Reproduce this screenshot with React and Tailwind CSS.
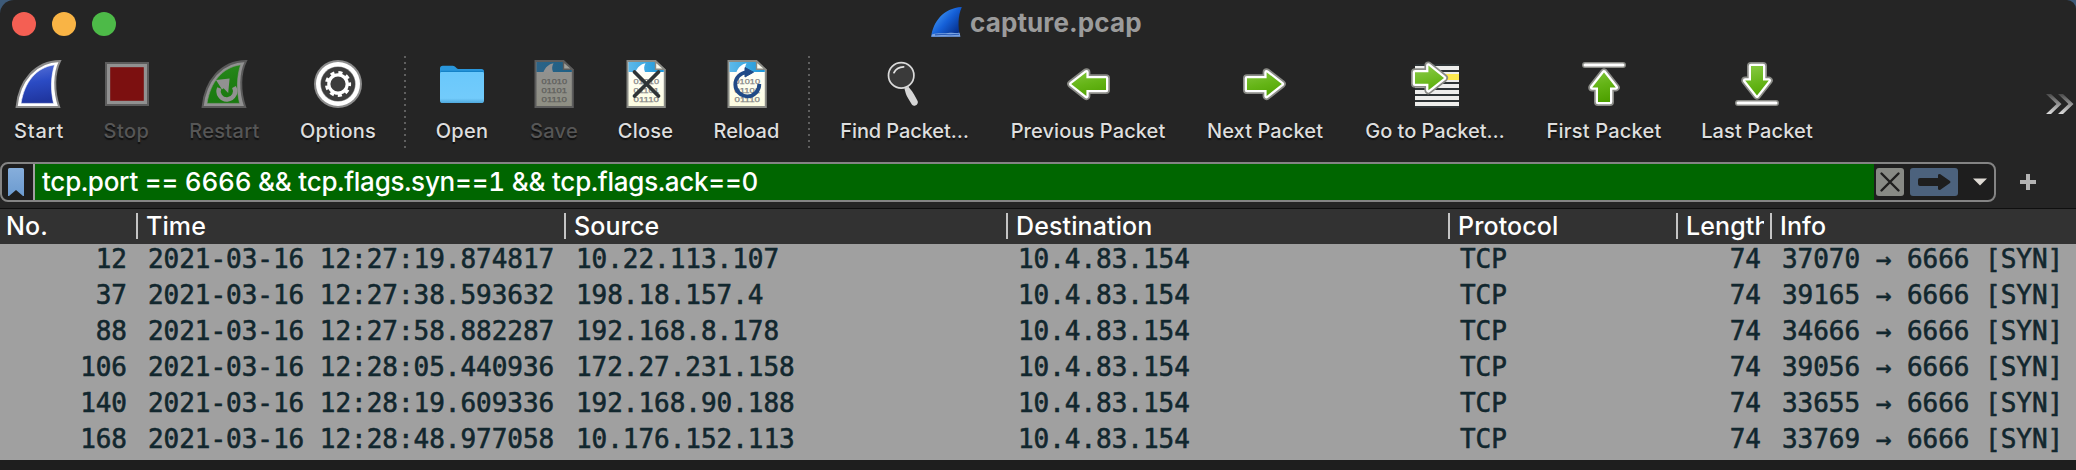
import React from "react";

function Fin({ id, stops, rim, line }) {
  return (
    <>
      <defs>
        <linearGradient id={id} x1="0" y1="0" x2="0.15" y2="1">
          <stop offset="0" stopColor={stops[0]} />
          <stop offset="0.5" stopColor={stops[1]} />
          <stop offset="1" stopColor={stops[2]} />
        </linearGradient>
      </defs>
      <path d="M1.6 47C4 21 20 1.6 45 1.1C39 13 38.6 31 44.2 47Z" fill={line} stroke={rim} strokeWidth="2" />
      <path d="M6 43.4C9.5 22 21 7.5 39.6 4.8C35.6 17 35.6 31 38.6 43.4Z" fill={`url(#${id})`} stroke={line} strokeWidth="0.6" />
    </>
  );
}

function StartIcon() {
  return (
    <svg className="size-12" viewBox="0 0 48 48">
      <Fin id="finBlue" stops={["#5a74d8", "#2b4bc4", "#2036a0"]} rim="#8a8a8a" line="#ffffff" />
    </svg>
  );
}

function StopIcon() {
  return (
    <svg className="size-12" viewBox="0 0 48 48">
      <rect x="2" y="2" width="44" height="44" fill="#5c5c5c" />
      <rect x="4" y="4" width="40" height="40" fill="#919191" />
      <rect x="7.2" y="7.2" width="33.6" height="33.6" fill="#7c1010" />
    </svg>
  );
}

function RestartIcon() {
  return (
    <svg className="size-12" viewBox="0 0 48 48">
      <Fin id="finGreen" stops={["#2a8a1e", "#1f7f14", "#1a7a10"]} rim="#5a5a5a" line="#919191" />
      <path d="M18.2 28A8.3 8.3 0 1 0 33 27" fill="none" stroke="#919191" strokeWidth="4.4" />
      <path d="M15 20L28.6 18.6L27.2 33L22.6 28.2L21 29.4Z" fill="#919191" />
    </svg>
  );
}

function OptionsIcon() {
  return (
    <svg className="size-12" viewBox="0 0 48 48">
      <circle cx="24" cy="24" r="24" fill="#8c8c8c" />
      <circle cx="24" cy="24" r="22" fill="#ffffff" />
      <circle cx="24" cy="24" r="17.6" fill="#8c8c8c" />
      <circle cx="24" cy="24" r="17" fill="#3c3c3c" />
      <circle cx="24" cy="24" r="9.2" fill="none" stroke="#ffffff" strokeWidth="3.2" />
      <circle cx="24" cy="24" r="11.6" fill="none" stroke="#ffffff" strokeWidth="3" strokeDasharray="4.1 4" strokeDashoffset="2" />
    </svg>
  );
}

function OpenIcon() {
  return (
    <svg className="size-12" viewBox="0 0 48 48">
      <defs>
        <linearGradient id="folder" x1="0" y1="0" x2="0" y2="1">
          <stop offset="0" stopColor="#6ac8fb" />
          <stop offset="0.85" stopColor="#72cbfb" />
          <stop offset="1" stopColor="#4fa8dc" />
        </linearGradient>
      </defs>
      <path d="M2 13V8.6Q2 5.8 4.8 5.8H14.5Q16 5.8 17.2 6.8L19 8.4Q20 9 21.5 9H43.4Q46 9 46 11.8V16H2Z" fill="#2a97dc" />
      <rect x="2" y="11.5" width="44" height="31.5" rx="2.6" fill="url(#folder)" />
      <path d="M2.5 11.4H45.5" stroke="#1583c8" strokeWidth="1.4" />
    </svg>
  );
}

function Page({ id, dim }) {
  return (
    <>
      <defs>
        <linearGradient id={id} x1="0" y1="0" x2="1" y2="0">
          <stop offset="0" stopColor={dim ? "#2c6387" : "#5db9ea"} />
          <stop offset="1" stopColor={dim ? "#1d5f85" : "#1d96d8"} />
        </linearGradient>
        <linearGradient id={id + "p"} x1="0" y1="0" x2="0" y2="1">
          <stop offset="0" stopColor={dim ? "#929292" : "#ffffff"} />
          <stop offset="1" stopColor={dim ? "#8f8f83" : "#fdfde0"} />
        </linearGradient>
      </defs>
      <path d="M5.5 1H33.5L42.8 10V47H5.5Z" fill={`url(#${id}p)`} stroke={dim ? "#5c5c5c" : "#8a8b86"} strokeWidth="2" />
      <path d="M6.5 2H33V8.5H41.8V12H6.5Z" fill={`url(#${id})`} />
      <path d="M13.5 12C15.5 7 18.5 4.2 23.5 3.2C21.8 6 21.8 9 23 12Z" fill={dim ? "#929292" : "#ffffff"} />
      <path d="M33.5 1.6V9.2H42.2Z" fill={dim ? "#a0a09a" : "#fbfbee"} stroke={dim ? "#5c5c5c" : "#8a8b86"} strokeWidth="1.4" />
      <g fontFamily="Liberation Sans, sans-serif" fontSize="7.4" fill={dim ? "#5f5f5c" : "#858585"} stroke={dim ? "#5f5f5c" : "#858585"} strokeWidth="0.25">
        <text x="11.5" y="23.8" textLength="25.5" lengthAdjust="spacingAndGlyphs">01010</text>
        <text x="11.5" y="32.8" textLength="25.5" lengthAdjust="spacingAndGlyphs">01101</text>
        <text x="11.5" y="41.8" textLength="25.5" lengthAdjust="spacingAndGlyphs">01110</text>
      </g>
    </>
  );
}

function SaveIcon() {
  return (
    <svg className="size-12" viewBox="0 0 48 48">
      <Page id="pageSave" dim />
    </svg>
  );
}

function CloseIcon() {
  return (
    <svg className="size-12" viewBox="0 0 48 48">
      <Page id="pageClose" />
      <path d="M12.5 12L36.5 36M36.5 12L12.5 36" stroke="#2e3436" strokeWidth="3.8" strokeLinecap="round" />
    </svg>
  );
}

function ReloadIcon() {
  return (
    <svg className="size-12" viewBox="0 0 48 48">
      <Page id="pageReload" />
      <path d="M24 12.3A12 12 0 1 0 36.3 24" fill="none" stroke="#204a87" strokeWidth="3.8" />
      <path d="M22 7.6L30.5 12.2L22 17Z" fill="#204a87" stroke="#204a87" strokeLinejoin="round" />
    </svg>
  );
}

function FindIcon() {
  return (
    <svg className="size-12" viewBox="0 0 48 48">
      <path d="M23.4 28.6L27.4 26.8L28.8 28.6C32 32 34.4 37 36.6 41C38 44 33.6 47.6 31 44.8C28 40 25.6 36.4 24.8 33.6Z" fill="#d6d6d6" />
      <circle cx="20.2" cy="15.4" r="12.7" fill="#3a3a3a" stroke="#dadada" strokeWidth="1.7" />
      <path d="M13 12.6C14.6 9.2 17.8 7 22.6 6.8" fill="none" stroke="#e2e2e2" strokeWidth="1.8" strokeLinecap="round" />
    </svg>
  );
}

function GreenDefs() {
  return (
    <svg className="absolute size-0">
      <defs>
        <linearGradient id="green" gradientUnits="userSpaceOnUse" x1="20" y1="8" x2="28" y2="40">
          <stop offset="0" stopColor="#82c63c" />
          <stop offset="0.5" stopColor="#64b416" />
          <stop offset="1" stopColor="#4ea000" />
        </linearGradient>
      </defs>
    </svg>
  );
}

function Arrow({ d }) {
  return (
    <>
      <path d={d} fill="#8a8b86" stroke="#8a8b86" strokeWidth="8" strokeLinejoin="round" />
      <path d={d} fill="#ffffff" stroke="#ffffff" strokeWidth="4.6" strokeLinejoin="round" />
      <path d={d} fill="url(#green)" />
    </>
  );
}

function PrevIcon() {
  return (
    <svg className="size-12" viewBox="0 0 48 48">
      <Arrow d="M42 18.2H22.4V12.2L7.2 24L22.4 36V30H42Z" />
    </svg>
  );
}

function NextIcon() {
  return (
    <svg className="size-12" viewBox="0 0 48 48">
      <Arrow d="M6 18.2H25.6V12.2L40.8 24L25.6 36V30H6Z" />
    </svg>
  );
}

function GotoIcon() {
  return (
    <svg className="size-12" viewBox="0 0 48 48">
      <rect x="4" y="4" width="44" height="44" fill="#2e3436" />
      <path d="M4 8H48M4 14H48M4 20H48M4 26H48M4 32H48M4 38H48M4 44H48" stroke="#eeeeec" strokeWidth="4" />
      <rect x="34" y="14" width="14" height="6" fill="#fce94f" />
      <Arrow d="M4 12.2H17.4V5.6L33 18L17.4 30.2V23.8H4Z" />
    </svg>
  );
}

function FirstIcon() {
  return (
    <svg className="size-12" viewBox="0 0 48 48">
      <path d="M5 5H43" stroke="#8a8b86" strokeWidth="6" strokeLinecap="round" />
      <path d="M5 5H43" stroke="#ffffff" strokeWidth="3" strokeLinecap="round" />
      <Arrow d="M24 12.4L35.8 27.4H30V42H18V27.4H12.2Z" />
    </svg>
  );
}

function LastIcon() {
  return (
    <svg className="size-12" viewBox="0 0 48 48">
      <path d="M5 43H43" stroke="#8a8b86" strokeWidth="6" strokeLinecap="round" />
      <path d="M5 43H43" stroke="#ffffff" strokeWidth="3" strokeLinecap="round" />
      <Arrow d="M24 35.6L35.8 20.6H30V6H18V20.6H12.2Z" />
    </svg>
  );
}

const TOOLS = [
  { label: "Start", icon: StartIcon, w: "w-[78px]", track: "tracking-[0.8px]" },
  { label: "Stop", icon: StopIcon, w: "w-[97px] mr-px", off: true, track: "tracking-[0.5px]" },
  { label: "Restart", icon: RestartIcon, w: "w-[97px]", off: true, track: "tracking-[0.3px]" },
  { label: "Options", icon: OptionsIcon, w: "w-[130px] mr-px", track: "tracking-[0.2px]" },
  { sep: true },
  { label: "Open", icon: OpenIcon, w: "w-[112px]", track: "tracking-[0.3px]" },
  { label: "Save", icon: SaveIcon, w: "w-[72px]", off: true, track: "tracking-[0.3px]" },
  { label: "Close", icon: CloseIcon, w: "w-[111px]", track: "tracking-[0.2px]" },
  { label: "Reload", icon: ReloadIcon, w: "w-[91px] mr-4", track: "tracking-[0.1px]" },
  { sep: true },
  { label: "Find Packet…", icon: FindIcon, w: "w-[189px]", track: "tracking-[-0.1px]" },
  { label: "Previous Packet", icon: PrevIcon, w: "w-[178px]", track: "tracking-[0.1px]" },
  { label: "Next Packet", icon: NextIcon, w: "w-[176px]", track: "tracking-[0.1px]" },
  { label: "Go to Packet…", icon: GotoIcon, w: "w-[164px]", track: "tracking-[0px]" },
  { label: "First Packet", icon: FirstIcon, w: "w-[174px]", track: "tracking-[0.2px]" },
  { label: "Last Packet", icon: LastIcon, w: "w-[132px]", track: "tracking-[0.1px]" },
];

function Separator() {
  return (
    <svg className="mt-2 h-[94px] w-[2px] shrink-0" viewBox="0 0 2 94">
      <path d="M1 0V94" stroke="#5f5f5f" strokeWidth="2" strokeDasharray="2 4" />
    </svg>
  );
}

function Tool({ label, icon: Icon, w, off, track }) {
  return (
    <div className={`flex shrink-0 flex-col items-center pt-3 ${w}`}>
      <Icon />
      <span
        className={`mt-[11px] text-[20px] leading-6 font-medium whitespace-nowrap [text-shadow:0_2px_1px_#111] ${track} ${off ? "text-[#565656]" : "text-[#dedede]"}`}
      >
        {label}
      </span>
    </div>
  );
}

function TitleBar() {
  return (
    <div className="flex h-12 shrink-0 items-center pl-3">
      <div className="flex w-[918px] gap-4">
        <span className="size-6 rounded-full bg-[#f45f53]" />
        <span className="size-6 rounded-full bg-[#f9b445]" />
        <span className="size-6 rounded-full bg-[#4dba48]" />
      </div>
      <svg className="mt-[-4px] h-8 w-8" viewBox="0 0 32 32">
        <defs>
          <linearGradient id="titleFin" x1="0.2" y1="0.2" x2="0.9" y2="0.8">
            <stop offset="0" stopColor="#3f93f0" />
            <stop offset="0.45" stopColor="#1560d8" />
            <stop offset="1" stopColor="#06308c" />
          </linearGradient>
        </defs>
        <path d="M1.2 30.8C3 16 13 2.2 31.8 1C27.8 10 27.8 21 30.2 30.8Z" fill="url(#titleFin)" />
        <path d="M1.2 30.8L2 28.6C9 26.4 13 28 18 27C23 26 26 27.4 29.6 26.8L30.4 30.8Z" fill="#7ba3e0" />
        <path d="M5 28.9C12 27.6 18 29.6 29 28.2" fill="none" stroke="#2a5cb8" strokeWidth="1.1" />
      </svg>
      <span className="mt-[-2px] ml-[8px] text-[26px] leading-8 font-bold tracking-[0.12px] text-[#9b9b9b]">capture.pcap</span>
    </div>
  );
}

function FilterBar() {
  return (
    <div className="flex h-10 shrink-0 items-center">
      <div className="flex h-10 w-[1996px] items-center rounded-lg border-2 border-[#848484] bg-[#1e1e1e]">
        <svg className="ml-[6px] h-7 w-4" viewBox="0 0 16 28">
          <defs>
            <linearGradient id="mark" x1="0" y1="0" x2="0" y2="1">
              <stop offset="0" stopColor="#86aedb" />
              <stop offset="1" stopColor="#6c9bd0" />
            </linearGradient>
          </defs>
          <path d="M0 1.5Q0 0 1.5 0H14.5Q16 0 16 1.5V28H15L8 22L1 28H0Z" fill="url(#mark)" />
        </svg>
        <div className="ml-[9px] flex h-9 w-[1841px] items-center border-l-2 border-[#a0a0a0] bg-[#006600] pl-[7px] text-[26px] leading-8 font-medium tracking-[-0.22px] whitespace-nowrap text-white tabular-nums">
          {"tcp.port == 6666 && tcp.flags.syn==1 && tcp.flags.ack==0"}
        </div>
        <svg className="ml-[2px] size-7" viewBox="0 0 28 28">
          <rect width="28" height="28" rx="3" fill="#888a85" />
          <path d="M5.5 5.5L22.5 22.5M22.5 5.5L5.5 22.5" stroke="#1e1e1e" strokeWidth="2.4" strokeLinecap="round" />
        </svg>
        <svg className="ml-[6px] h-7 w-12" viewBox="0 0 48 28">
          <rect width="48" height="28" rx="3" fill="#4c627d" />
          <path d="M10 10H28V7Q28 6 30 6L40 13Q41 14 40 15L30 22Q28 22 28 21V18H10Q8 18 8 16V12Q8 10 10 10Z" fill="#1e1e1e" />
        </svg>
        <svg className="ml-[15px] h-2 w-[14px]" viewBox="0 0 14 8">
          <path d="M0 0.5H14L7 7.5Z" fill="#dedad4" />
        </svg>
      </div>
      <svg className="ml-6 size-4" viewBox="0 0 16 16">
        <path d="M8 0V16M0 8H16" stroke="#b4b4b4" strokeWidth="4" />
      </svg>
    </div>
  );
}

const ROWS = [
  ["12", "2021-03-16 12:27:19.874817", "10.22.113.107", "37070"],
  ["37", "2021-03-16 12:27:38.593632", "198.18.157.4", "39165"],
  ["88", "2021-03-16 12:27:58.882287", "192.168.8.178", "34666"],
  ["106", "2021-03-16 12:28:05.440936", "172.27.231.158", "39056"],
  ["140", "2021-03-16 12:28:19.609336", "192.168.90.188", "33655"],
  ["168", "2021-03-16 12:28:48.977058", "10.176.152.113", "33769"],
];

const COLS = "grid grid-cols-[136px_428px_442px_442px_228px_94px_306px]";

function HeadCell({ children, first, clip }) {
  return (
    <div className={`flex h-[35px] ${first ? "pl-[6px]" : "gap-2"}`}>
      {!first && <span className="mt-1 h-[26px] w-[2px] shrink-0 bg-[#c4c4c4]" />}
      <span className={`leading-[35px] ${clip ? "w-[78px] overflow-hidden" : ""}`}>{children}</span>
    </div>
  );
}

function PacketTable() {
  return (
    <div className="mt-[6px] shrink-0 border-t border-[#0f0f0f]">
      <div className={`${COLS} h-[35px] bg-[#323232] text-[25px] font-medium tracking-[0.12px] text-white`}>
        <HeadCell first>No.</HeadCell>
        <HeadCell>Time</HeadCell>
        <HeadCell>Source</HeadCell>
        <HeadCell>Destination</HeadCell>
        <HeadCell>Protocol</HeadCell>
        <HeadCell clip>Length</HeadCell>
        <HeadCell>Info</HeadCell>
      </div>
      <div className="h-[216px] bg-[#a0a0a0] font-['DejaVu_Sans_Mono',monospace] text-[26px] leading-[30px] tracking-[-0.03px] text-[#12272e]">
        {ROWS.map(([no, time, source, port]) => (
          <div key={no} className={`${COLS} h-9 whitespace-pre [-webkit-text-stroke:0.6px_#12272e]`}>
            <span className="pr-[9px] text-right">{no}</span>
            <span className="pl-3">{time}</span>
            <span className="pl-3">{source}</span>
            <span className="pl-3">10.4.83.154</span>
            <span className="pl-3">TCP</span>
            <span className="pr-[9px] text-right">74</span>
            <span className="pl-3">{port + " → 6666 [SYN]"}</span>
          </div>
        ))}
      </div>
    </div>
  );
}

export default function App() {
  return (
    <div className="h-[470px] w-[2076px] overflow-hidden bg-[#3d5a78]">
      <GreenDefs />
      <div className="flex h-full flex-col overflow-hidden rounded-tl-[14px] rounded-tr-[9px] bg-[#252525] font-['Inter',sans-serif]">
        <TitleBar />
        <div className="flex h-[114px] shrink-0">
          {TOOLS.map((tool, i) => (tool.sep ? <Separator key={i} /> : <Tool key={i} {...tool} />))}
          <svg className="mt-[46px] ml-[223px] h-5 w-7 shrink-0" viewBox="0 0 28 20">
            <defs>
              <linearGradient id="more" x1="0" y1="0" x2="0" y2="1">
                <stop offset="0" stopColor="#4a4a4a" />
                <stop offset="1" stopColor="#dcdcdc" />
              </linearGradient>
            </defs>
            <path d="M0 0H5L15.5 10L5 20H0L10.5 10ZM12 0H17L27.5 10L17 20H12L22.5 10Z" fill="url(#more)" />
          </svg>
        </div>
        <FilterBar />
        <PacketTable />
        <div className="grow bg-[#1e1e1e]" />
      </div>
    </div>
  );
}
